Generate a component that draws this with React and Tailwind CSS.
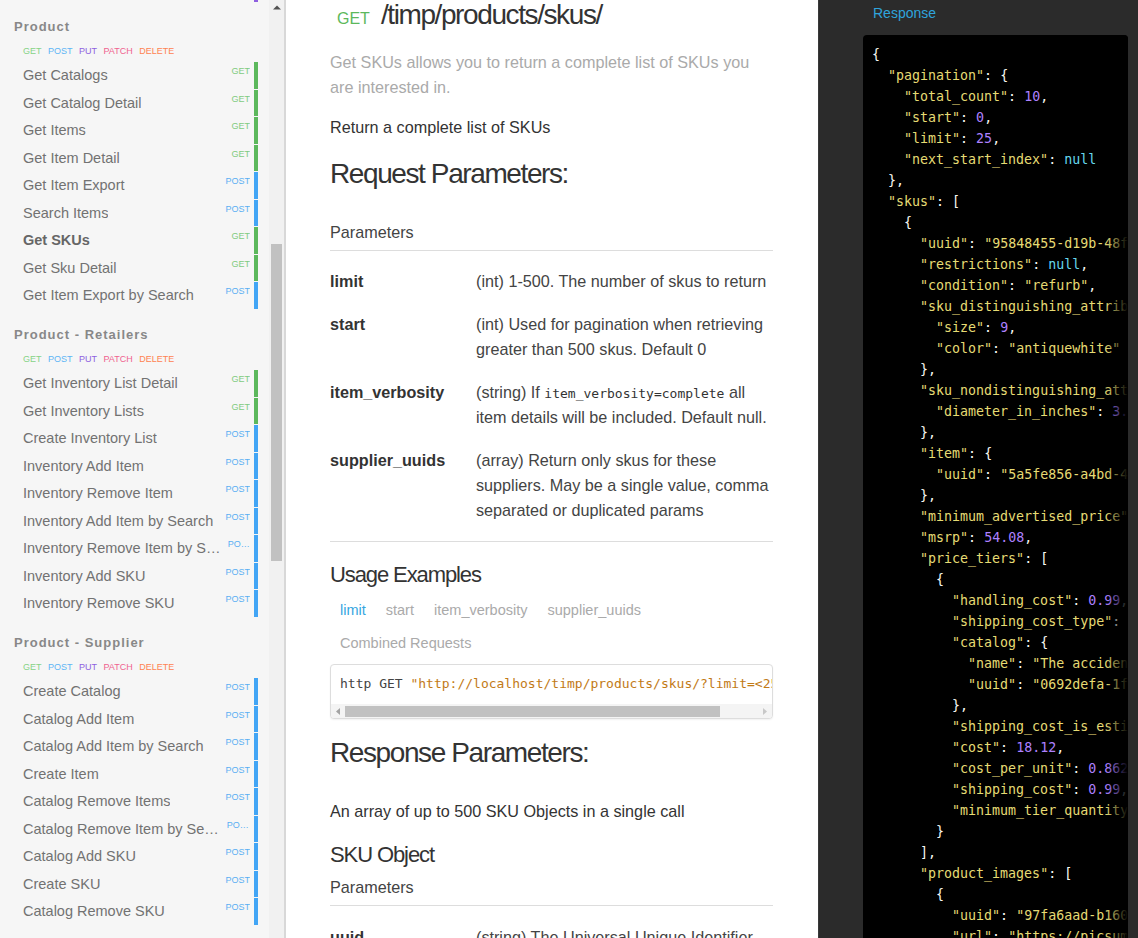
import React from 'react';

const TAG_COLOR = { GET: 'text-[#7fcb7f]', POST: 'text-[#5aaff3]' };
const BAR_COLOR = { GET: 'bg-[#5cb85c]', POST: 'bg-[#42a5f5]' };

const SECTIONS = [
  {
    title: 'Product',
    items: [
      ['Get Catalogs', 'GET'],
      ['Get Catalog Detail', 'GET'],
      ['Get Items', 'GET'],
      ['Get Item Detail', 'GET'],
      ['Get Item Export', 'POST'],
      ['Search Items', 'POST'],
      ['Get SKUs', 'GET', true],
      ['Get Sku Detail', 'GET'],
      ['Get Item Export by Search', 'POST'],
    ],
  },
  {
    title: 'Product - Retailers',
    items: [
      ['Get Inventory List Detail', 'GET'],
      ['Get Inventory Lists', 'GET'],
      ['Create Inventory List', 'POST'],
      ['Inventory Add Item', 'POST'],
      ['Inventory Remove Item', 'POST'],
      ['Inventory Add Item by Search', 'POST'],
      ['Inventory Remove Item by Search', 'POST'],
      ['Inventory Add SKU', 'POST'],
      ['Inventory Remove SKU', 'POST'],
    ],
  },
  {
    title: 'Product - Supplier',
    items: [
      ['Create Catalog', 'POST'],
      ['Catalog Add Item', 'POST'],
      ['Catalog Add Item by Search', 'POST'],
      ['Create Item', 'POST'],
      ['Catalog Remove Items', 'POST'],
      ['Catalog Remove Item by Search', 'POST'],
      ['Catalog Add SKU', 'POST'],
      ['Create SKU', 'POST'],
      ['Catalog Remove SKU', 'POST'],
    ],
  },
];

const JSON_LINES = [
  '{',
  '  "pagination": {',
  '    "total_count": 10,',
  '    "start": 0,',
  '    "limit": 25,',
  '    "next_start_index": null',
  '  },',
  '  "skus": [',
  '    {',
  '      "uuid": "95848455-d19b-48fa-b2c1-6f0e3a9d7c21",',
  '      "restrictions": null,',
  '      "condition": "refurb",',
  '      "sku_distinguishing_attributes": {',
  '        "size": 9,',
  '        "color": "antiquewhite"',
  '      },',
  '      "sku_nondistinguishing_attributes": {',
  '        "diameter_in_inches": 3.5',
  '      },',
  '      "item": {',
  '        "uuid": "5a5fe856-a4bd-4c1e-9a7b-0d2f1c3e8b55"',
  '      },',
  '      "minimum_advertised_price": 64.99,',
  '      "msrp": 54.08,',
  '      "price_tiers": [',
  '        {',
  '          "handling_cost": 0.99,',
  '          "shipping_cost_type": "flat_rate",',
  '          "catalog": {',
  '            "name": "The accidental catalog",',
  '            "uuid": "0692defa-1f3b-4a8e-b5c2-7e9d0a1b2c3d"',
  '          },',
  '          "shipping_cost_is_estimated": false,',
  '          "cost": 18.12,',
  '          "cost_per_unit": 0.8628,',
  '          "shipping_cost": 0.99,',
  '          "minimum_tier_quantity": 21',
  '        }',
  '      ],',
  '      "product_images": [',
  '        {',
  '          "uuid": "97fa6aad-b160-4f2e-8c3a-1d5e6f7a8b9c",',
  '          "url": "https://picsum.photos/400/400"',
];

function renderJsonLine(line) {
  const re = /("(?:[^"\\]|\\.)*")|(-?\d+(?:\.\d+)?)|(null|true|false)|(\s+)|(.)/g;
  const out = [];
  let m;
  let i = 0;
  while ((m = re.exec(line))) {
    let cls = 'text-[#f8f8f2]';
    if (m[1]) cls = 'text-[#e6db74]';
    else if (m[2]) cls = 'text-[#ae81ff]';
    else if (m[3]) cls = 'text-[#66d9ef]';
    out.push(
      <span key={i++} className={cls}>
        {m[0]}
      </span>
    );
  }
  return out;
}

function NavItem({ label, method, active }) {
  return (
    <div className="flex h-[27.5px] pl-[23px] pr-[11px]">
      <div
        className={
          active
            ? 'min-w-0 truncate text-[14.5px] font-bold leading-[27.5px] text-[#666]'
            : 'min-w-0 truncate text-[14.5px] leading-[27.5px] text-[#727272]'
        }
      >
        {label}
      </div>
      <div className="min-w-[5px] flex-1" />
      <div className={`min-w-0 truncate pt-[3px] text-[9px] leading-[12px] ${TAG_COLOR[method]}`}>{method}</div>
      <div className={`mb-[1px] ml-[4px] w-[4px] shrink-0 ${BAR_COLOR[method]}`} />
    </div>
  );
}

function Section({ title, items, first }) {
  return (
    <div className={first ? 'mt-[14px]' : 'mt-[14.5px]'}>
      <div className="h-[20px] pl-[14px] text-[13px] font-bold leading-[21px] tracking-[1px] text-[#888]">{title}</div>
      <div className="mt-[9px] flex h-[12px] gap-[6.5px] pl-[23px] text-[9px] leading-[12px]">
        <span className="text-[#86d386]">GET</span>
        <span className="text-[#5db5f5]">POST</span>
        <span className="text-[#8e5fe0]">PUT</span>
        <span className="text-[#f0628f]">PATCH</span>
        <span className="text-[#ff8352]">DELETE</span>
      </div>
      <div className="mt-[5px]">
        {items.map(([label, method, active]) => (
          <NavItem key={label} label={label} method={method} active={active} />
        ))}
      </div>
    </div>
  );
}

function ParamRow({ name, children }) {
  return (
    <div className="flex py-[9px] text-[16.2px] leading-[25px]">
      <div className="w-[146px] shrink-0 font-bold text-[#333]">{name}</div>
      <div className="min-w-0 flex-1 text-[#444]">{children}</div>
    </div>
  );
}

export default function App() {
  return (
    <div className="flex h-[938px] w-[1138px] overflow-hidden bg-white font-['Liberation_Sans',Arial,sans-serif]">
      {/* Sidebar */}
      <div className="w-[269px] shrink-0 overflow-hidden bg-[#f6f6f6]">
        <div className="flex h-[2px] justify-end pr-[11px]">
          <div className="w-[4px] bg-[#8e5fe0]" />
        </div>
        {SECTIONS.map((s, idx) => (
          <Section key={s.title} title={s.title} items={s.items} first={idx === 0} />
        ))}
      </div>

      {/* Sidebar scrollbar */}
      <div className="flex w-[15px] shrink-0 flex-col bg-[#f1f1f1]">
        <div className="flex h-[14px] items-center justify-center">
          <svg width="8" height="5" viewBox="0 0 8 5">
            <path d="M0 4.5 L4 0.5 L8 4.5 Z" fill="#505050" />
          </svg>
        </div>
        <div className="h-[230px]" />
        <div className="mx-[2px] h-[317px] bg-[#c1c1c1]" />
      </div>

      {/* Main content */}
      <div className="w-[534px] shrink-0 overflow-hidden border-l-2 border-[#d8d8d8] bg-white pl-[44px] pr-[45px]">
        <div className="flex h-[30px] items-baseline leading-[30px]">
          <span className="ml-[7px] text-[16px] text-[#5cb85c]">GET</span>
          <span className="ml-[11px] text-[28px] tracking-[-1.4px] text-[#333]">/timp/products/skus/</span>
        </div>
        <p className="mt-[19.5px] max-w-[428px] text-[16.2px] leading-[25px] text-[#aaa]">
          Get SKUs allows you to return a complete list of SKUs you are interested in.
        </p>
        <p className="mt-[15px] text-[16.2px] leading-[25px] text-[#333]">Return a complete list of SKUs</p>
        <h2 className="mt-[17px] text-[28px] leading-[34px] tracking-[-1.4px] text-[#333]">Request Parameters:</h2>
        <div className="mt-[29px] border-b border-[#ddd] pb-[5px] text-[16.2px] leading-[25px] text-[#444]">Parameters</div>
        <div className="border-b border-[#ddd] pb-[8.5px] pt-[9.5px]">
          <ParamRow name="limit">(int) 1-500. The number of skus to return</ParamRow>
          <ParamRow name="start">(int) Used for pagination when retrieving greater than 500 skus. Default 0</ParamRow>
          <ParamRow name="item_verbosity">
            (string) If{' '}
            <code className="font-['DejaVu_Sans_Mono',monospace] text-[13px] leading-none text-[#333]">
              item_verbosity=complete
            </code>{' '}
            all item details will be included. Default null.
          </ParamRow>
          <ParamRow name="supplier_uuids">
            (array) Return only skus for these suppliers. May be a single value, comma separated or duplicated params
          </ParamRow>
        </div>

        <h3 className="mt-[19.5px] text-[22px] leading-[28px] tracking-[-1.1px] text-[#333]">Usage Examples</h3>
        <div className="mt-[4.5px] flex flex-wrap text-[14.5px] leading-[33px]">
          <span className="px-[10px] text-[#35a6df]">limit</span>
          <span className="px-[10px] text-[#aaa]">start</span>
          <span className="px-[10px] text-[#aaa]">item_verbosity</span>
          <span className="px-[10px] text-[#aaa]">supplier_uuids</span>
          <span className="px-[10px] text-[#aaa]">Combined Requests</span>
        </div>

        <div className="mt-[4.5px] overflow-hidden rounded-[4px] border border-[#ddd] bg-white shadow-[0_1px_2px_rgba(0,0,0,0.06)]">
          <div className="overflow-hidden whitespace-pre pb-[10px] pl-[9px] pt-[9px] font-['DejaVu_Sans_Mono',monospace] text-[13px] leading-[20px]">
            <span className="text-[#444]">http GET </span>
            <span className="text-[#c27a16]">"http://localhost/timp/products/skus/?limit=&lt;25&gt;"</span>
          </div>
          <div className="flex h-[14px] items-center bg-[#f4f4f4]">
            <div className="flex h-[14px] w-[14px] items-center justify-center">
              <svg width="4" height="7" viewBox="0 0 4 7">
                <path d="M4 0 L0 3.5 L4 7 Z" fill="#a3a3a3" />
              </svg>
            </div>
            <div className="h-[11px] w-[375px] bg-[#c1c1c1]" />
            <div className="flex-1" />
            <div className="flex h-[14px] w-[14px] items-center justify-center">
              <svg width="4" height="7" viewBox="0 0 4 7">
                <path d="M0 0 L4 3.5 L0 7 Z" fill="#c8c8c8" />
              </svg>
            </div>
          </div>
        </div>

        <h2 className="mt-[17px] text-[28px] leading-[34px] tracking-[-1.4px] text-[#333]">Response Parameters:</h2>
        <p className="mt-[29px] text-[16.2px] leading-[25px] text-[#333]">An array of up to 500 SKU Objects in a single call</p>
        <h3 className="mt-[16.7px] text-[22px] leading-[28px] tracking-[-1.1px] text-[#333]">SKU Object</h3>
        <div className="mt-[6.6px] border-b border-[#ddd] pb-[5px] text-[16.2px] leading-[25px] text-[#444]">Parameters</div>
        <div className="pt-[9.5px]">
          <ParamRow name="uuid">(string) The Universal Unique Identifier for this SKU object</ParamRow>
        </div>
      </div>

      {/* Right panel */}
      <div className="flex min-w-0 flex-1 flex-col border-l border-[#3a3a3a] bg-[#2b2b2b] pl-[44px] pr-[10px]">
        <div className="pl-[10px] pt-[3px] text-[14px] leading-[20px] text-[#2fa4dc]">Response</div>
        <div className="relative mt-[12px] flex-1 overflow-hidden rounded-t-[4px] bg-black pl-[9px] pt-[8.5px] font-['DejaVu_Sans_Mono',monospace] text-[13.3px]">
          {JSON_LINES.map((line, i) => (
            <div key={i} className="h-[21px] whitespace-pre leading-[21px]">
              {renderJsonLine(line)}
            </div>
          ))}
          <div className="absolute bottom-0 right-0 top-0 w-[22px] bg-linear-to-l from-black to-transparent" />
        </div>
      </div>
    </div>
  );
}
